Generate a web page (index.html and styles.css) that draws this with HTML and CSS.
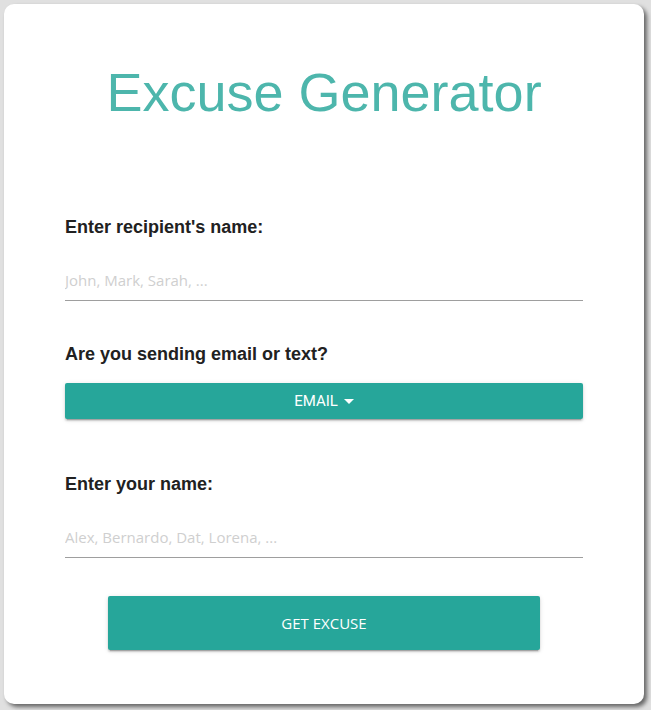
FILE: index.html
```html
<!DOCTYPE html>
<html>
<head>
<meta charset="utf-8">
<title>Excuse Generator</title>
<link rel="stylesheet" href="styles.css">
</head>
<body>
<main class="card">
  <h1 class="title">Excuse Generator</h1>
  <label class="label label-first" for="recipient">Enter recipient's name:</label>
  <input class="field" id="recipient" type="text" placeholder="John, Mark, Sarah, ...">
  <label class="label label-second">Are you sending email or text?</label>
  <button class="dropdown" type="button">EMAIL<span class="caret"></span></button>
  <label class="label label-third" for="sender">Enter your name:</label>
  <input class="field" id="sender" type="text" placeholder="Alex, Bernardo, Dat, Lorena, ...">
  <div class="actions">
    <button class="submit" type="button">GET EXCUSE</button>
  </div>
</main>
</body>
</html>
```

FILE: styles.css
```css
html, body {
  margin: 0;
  padding: 0;
}
body {
  background: #e0e0e0;
  width: 651px;
  height: 710px;
  overflow: hidden;
}
.card {
  box-sizing: border-box;
  margin: 4px;
  width: 640px;
  height: 700px;
  background: #ffffff;
  border-radius: 10px;
  box-shadow: 3px 3px 4px rgba(0, 0, 0, 0.55);
  padding: 61px 61px 0;
  display: flex;
  flex-direction: column;
}
.title {
  margin: 0;
  font-family: "Liberation Sans", Arial, sans-serif;
  font-weight: 400;
  font-size: 54px;
  line-height: 54px;
  color: #4db6ac;
  text-align: center;
}
.label {
  display: block;
  font-family: "Liberation Sans", Arial, sans-serif;
  font-weight: 700;
  font-size: 18px;
  line-height: 18px;
  color: #212121;
}
.label-first { margin-top: 99px; }
.label-second { margin-top: 44px; }
.label-third { margin-top: 56px; }
.field {
  box-sizing: border-box;
  display: block;
  width: 100%;
  height: 41px;
  margin: 24px 0 0;
  padding: 0;
  border: none;
  border-bottom: 1px solid #9e9e9e;
  outline: none;
  background: transparent;
  font-family: "Open Sans", "Noto Sans", sans-serif;
  font-size: 15px;
  color: #212121;
}
.field::placeholder {
  color: #cfcfcf;
}
.dropdown {
  margin-top: 20px;
  height: 36px;
  width: 100%;
  border: none;
  border-radius: 2px;
  background: #26a69a;
  color: #ffffff;
  font-family: Roboto, "Liberation Sans", sans-serif;
  font-size: 15px;
  display: flex;
  align-items: center;
  justify-content: center;
  gap: 6px;
  padding: 0;
  box-shadow: 0 2px 2px 0 rgba(0,0,0,0.14), 0 1px 5px 0 rgba(0,0,0,0.12), 0 3px 1px -2px rgba(0,0,0,0.2);
}
.caret {
  width: 0;
  height: 0;
  border-left: 5px solid transparent;
  border-right: 5px solid transparent;
  border-top: 5px solid #ffffff;
}
.actions {
  display: flex;
  justify-content: center;
  margin-top: 38px;
}
.submit {
  width: 432px;
  height: 54px;
  border: none;
  border-radius: 2px;
  background: #26a69a;
  color: #ffffff;
  font-family: "Open Sans", "Noto Sans", sans-serif;
  font-size: 15px;
  padding: 0;
  box-shadow: 0 2px 2px 0 rgba(0,0,0,0.14), 0 1px 5px 0 rgba(0,0,0,0.12), 0 3px 1px -2px rgba(0,0,0,0.2);
}
```
